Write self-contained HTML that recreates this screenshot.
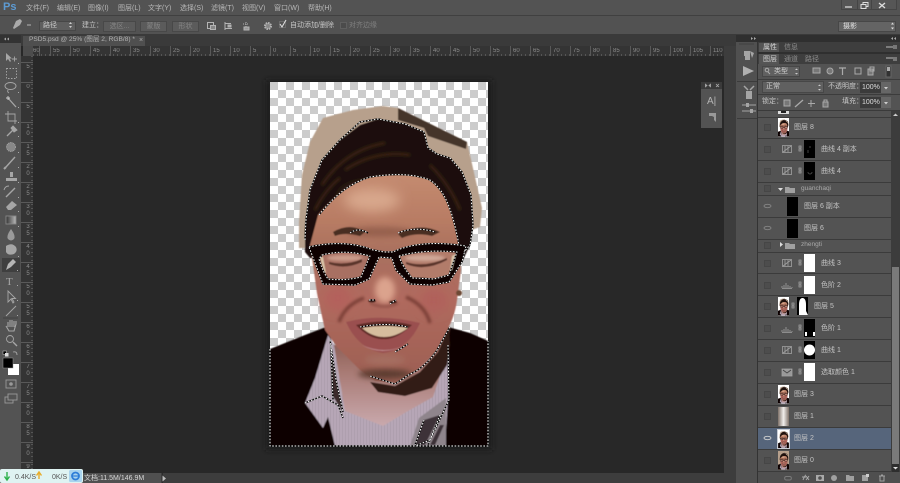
<!DOCTYPE html>
<html lang="zh"><head><meta charset="utf-8"><title>PS</title>
<style>
html,body{margin:0;padding:0;background:#282828}
#a{position:relative;width:900px;height:483px;overflow:hidden;background:#282828;font-family:"Liberation Sans","Noto Sans CJK SC",sans-serif;color:#c8c8c8}
.b{position:absolute}
.t{position:absolute;white-space:nowrap;line-height:1;font-size:7px;filter:blur(.3px)}
.m{top:5px;color:#b8b8b8;font-size:7px}
.btn{position:absolute;top:21px;height:9px;background:#5b5b5b;border:1px solid #484848;color:#858585;font-size:7px;line-height:9px;text-align:center}
.h{top:48px;font-size:6px;color:#8c8c8c}
.v{position:absolute;left:25px;width:6px;font-size:6px;line-height:7px;color:#8c8c8c;word-break:break-all;text-align:center;filter:blur(.3px)}
.r{position:absolute;left:758px;width:133px;background:#535353;border-bottom:1px solid #3b3b3b;box-sizing:border-box}
.lt{font-size:7px;color:#c4c4c4}
.mk{position:absolute;width:11px;height:18px}
</style></head><body><div id="a">
<!-- top bars -->
<div class="b" style="left:0;top:0;width:900px;height:15px;background:#535353"></div>
<div class="b" style="left:0;top:15px;width:900px;height:1px;background:#404040"></div>
<div class="b" style="left:0;top:16px;width:900px;height:19px;background:#525252"></div>
<div class="b" style="left:0;top:34px;width:900px;height:1px;background:#3a3a3a"></div>
<div class="b" style="left:0;top:35px;width:900px;height:11px;background:#3a3a3a"></div>
<div class="t" style="left:3px;top:2px;font-size:11px;font-weight:bold;color:#5d9bd3">Ps</div>
<div class="t m" style="left:26px">文件(F)</div><div class="t m" style="left:57px">编辑(E)</div><div class="t m" style="left:88px">图像(I)</div><div class="t m" style="left:118px">图层(L)</div><div class="t m" style="left:148px">文字(Y)</div><div class="t m" style="left:180px">选择(S)</div><div class="t m" style="left:211px">滤镜(T)</div><div class="t m" style="left:242px">视图(V)</div><div class="t m" style="left:274px">窗口(W)</div><div class="t m" style="left:308px">帮助(H)</div>
<!-- window buttons -->
<div class="b" style="left:841px;top:0;width:56px;height:10px;background:#565656;border:1px solid #454545;border-top:0;box-sizing:border-box"></div>
<div class="b" style="left:857px;top:0;width:1px;height:10px;background:#454545"></div><div class="b" style="left:871px;top:0;width:1px;height:10px;background:#454545"></div>
<!-- options -->
<div class="b" style="left:39px;top:21px;width:37px;height:10px;background:#5f5f5f;border:1px solid #474747;box-sizing:border-box"></div>
<div class="t" style="left:43px;top:22px;color:#ccc">路径</div>
<div class="t" style="left:82px;top:22px;color:#c4c4c4">建立：</div>
<div class="btn" style="left:103px;width:31px">选区...</div><div class="btn" style="left:140px;width:25px">蒙版</div><div class="btn" style="left:172px;width:25px">形状</div>
<div class="t" style="left:290px;top:22px;color:#c8c8c8">自动添加/删除</div>
<div class="t" style="left:349px;top:22px;color:#808080">对齐边缘</div>
<div class="b" style="left:838px;top:21px;width:58px;height:11px;background:#646464;border:1px solid #474747;box-sizing:border-box"></div>
<div class="t" style="left:843px;top:23px;color:#e0e0e0">摄影</div>
<!-- document tab -->
<div class="b" style="left:23px;top:36px;width:122px;height:10px;background:#4f4f4f"></div>
<div class="t" style="left:29px;top:37px;color:#b4b4b4;font-size:6.6px">PSD5.psd @ 25% (图层 2, RGB/8) *</div>
<div class="t" style="left:139px;top:37px;color:#aaa">×</div>
<!-- left toolbar -->
<div class="b" style="left:0;top:43px;width:21px;height:440px;background:#535353"></div>
<div class="b" style="left:0;top:35px;width:21px;height:8px;background:#333"></div>
<div class="b" style="left:2px;top:258px;width:18px;height:14px;background:#3f3f3f"></div>
<!-- rulers -->
<div class="b" style="left:23px;top:46px;width:10px;height:10px;background:#4c4c4c"></div>
<div class="b" style="left:33px;top:46px;width:691px;height:10px;background:repeating-linear-gradient(90deg,#595959 0 1px,transparent 1px 20px) 17px 0,#343434"></div>
<div class="b" style="left:33px;top:54px;width:691px;height:2px;background:repeating-linear-gradient(90deg,#555 0 1px,transparent 1px 4px)"></div>
<div class="b" style="left:21px;top:56px;width:12px;height:417px;background:#343434"></div>
<div class="b" style="left:31px;top:56px;width:2px;height:417px;background:repeating-linear-gradient(180deg,#555 0 1px,transparent 1px 4px)"></div>
<div class="b" style="left:21px;top:62px;width:12px;height:411px;background:repeating-linear-gradient(180deg,#595959 0 1px,transparent 1px 20px)"></div>
<div class="t h" style="left:33px">60</div><div class="t h" style="left:53px">55</div><div class="t h" style="left:73px">50</div><div class="t h" style="left:93px">45</div><div class="t h" style="left:113px">40</div><div class="t h" style="left:133px">35</div><div class="t h" style="left:153px">30</div><div class="t h" style="left:173px">25</div><div class="t h" style="left:193px">20</div><div class="t h" style="left:213px">15</div><div class="t h" style="left:233px">10</div><div class="t h" style="left:253px">5</div><div class="t h" style="left:273px">0</div><div class="t h" style="left:293px">5</div><div class="t h" style="left:313px">10</div><div class="t h" style="left:333px">15</div><div class="t h" style="left:353px">20</div><div class="t h" style="left:373px">25</div><div class="t h" style="left:393px">30</div><div class="t h" style="left:413px">35</div><div class="t h" style="left:433px">40</div><div class="t h" style="left:453px">45</div><div class="t h" style="left:473px">50</div><div class="t h" style="left:493px">55</div><div class="t h" style="left:513px">60</div><div class="t h" style="left:533px">65</div><div class="t h" style="left:553px">70</div><div class="t h" style="left:573px">75</div><div class="t h" style="left:593px">80</div><div class="t h" style="left:613px">85</div><div class="t h" style="left:633px">90</div><div class="t h" style="left:653px">95</div><div class="t h" style="left:673px">100</div><div class="t h" style="left:693px">105</div><div class="t h" style="left:713px">110</div>
<div class="v" style="top:64px">5</div><div class="v" style="top:84px">0</div><div class="v" style="top:104px">5</div><div class="v" style="top:124px">10</div><div class="v" style="top:144px">15</div><div class="v" style="top:164px">20</div><div class="v" style="top:184px">25</div><div class="v" style="top:204px">30</div><div class="v" style="top:224px">35</div><div class="v" style="top:244px">40</div><div class="v" style="top:264px">45</div><div class="v" style="top:284px">50</div><div class="v" style="top:304px">55</div><div class="v" style="top:324px">60</div><div class="v" style="top:344px">65</div><div class="v" style="top:364px">70</div><div class="v" style="top:384px">75</div><div class="v" style="top:404px">80</div><div class="v" style="top:424px">85</div><div class="v" style="top:444px">90</div><div class="v" style="top:464px">95</div>
<!-- right strip and status -->
<div class="b" style="left:724px;top:46px;width:12px;height:437px;background:#3d3d3d"></div>
<div class="b" style="left:21px;top:473px;width:715px;height:10px;background:#3d3d3d"></div>
<div class="b" style="left:83px;top:473px;width:78px;height:10px;background:#505050"></div>
<div class="t" style="left:84px;top:475px;color:#d8d8d8">文档:11.5M/146.9M</div>
<div class="b" style="left:162px;top:473px;width:1px;height:10px;background:#2c2c2c"></div>
<!-- dock -->
<div class="b" style="left:736px;top:35px;width:164px;height:8px;background:#2f2f2f"></div>
<div class="b" style="left:736px;top:42px;width:22px;height:441px;background:#505050;border-right:1px solid #333;box-sizing:border-box"></div>
<div class="b" style="left:758px;top:42px;width:142px;height:441px;background:#535353"></div>
<div class="b" style="left:758px;top:42px;width:142px;height:10px;background:#3e3e3e"></div>
<div class="b" style="left:759px;top:43px;width:20px;height:9px;background:#555"></div>
<div class="b" style="left:758px;top:52px;width:142px;height:2px;background:#2f2f2f"></div>
<div class="b" style="left:758px;top:54px;width:142px;height:10px;background:#3e3e3e"></div>
<div class="b" style="left:759px;top:54px;width:20px;height:10px;background:#555"></div>
<div class="t" style="left:763px;top:44px;color:#d4d4d4">属性</div><div class="t" style="left:784px;top:44px;color:#8e8e8e">信息</div>
<div class="t" style="left:763px;top:56px;color:#d4d4d4">图层</div><div class="t" style="left:784px;top:56px;color:#8e8e8e">通道</div><div class="t" style="left:805px;top:56px;color:#8e8e8e">路径</div>
<!-- layer controls -->
<div class="b" style="left:762px;top:66px;width:38px;height:11px;background:#606060;border:1px solid #474747;box-sizing:border-box"></div>
<div class="t" style="left:774px;top:68px;color:#d0d0d0">类型</div>
<div class="b" style="left:758px;top:79px;width:142px;height:1px;background:#3c3c3c"></div>
<div class="b" style="left:762px;top:81px;width:62px;height:12px;background:#606060;border:1px solid #474747;box-sizing:border-box"></div>
<div class="t" style="left:766px;top:83px;color:#d0d0d0">正常</div>
<div class="t" style="left:828px;top:83px;color:#c8c8c8">不透明度：</div>
<div class="b" style="left:860px;top:82px;width:31px;height:11px;background:#3b3b3b"></div>
<div class="b" style="left:881px;top:82px;width:10px;height:11px;background:#666"></div>
<div class="t" style="left:862px;top:84px;color:#ddd">100%</div>
<div class="b" style="left:758px;top:94px;width:142px;height:1px;background:#3c3c3c"></div>
<div class="t" style="left:762px;top:98px;color:#c8c8c8">锁定：</div>
<div class="t" style="left:842px;top:98px;color:#c8c8c8">填充：</div>
<div class="b" style="left:860px;top:97px;width:31px;height:11px;background:#3b3b3b"></div>
<div class="b" style="left:881px;top:97px;width:10px;height:11px;background:#666"></div>
<div class="t" style="left:862px;top:99px;color:#ddd">100%</div>
<div class="b" style="left:758px;top:110px;width:142px;height:1px;background:#3a3a3a"></div>
<!-- layer rows -->
<div class="r" style="top:111px;height:7px"></div>
<div class="r" style="top:118px;height:21px"></div>
<div class="r" style="top:139px;height:22px"></div>
<div class="r" style="top:161px;height:22px"></div>
<div class="r" style="top:183px;height:13px"></div>
<div class="r" style="top:196px;height:22px"></div>
<div class="r" style="top:218px;height:22px"></div>
<div class="r" style="top:240px;height:13px"></div>
<div class="r" style="top:253px;height:21px"></div>
<div class="r" style="top:274px;height:22px"></div>
<div class="r" style="top:296px;height:22px"></div>
<div class="r" style="top:318px;height:22px"></div>
<div class="r" style="top:340px;height:22px"></div>
<div class="r" style="top:362px;height:22px"></div>
<div class="r" style="top:384px;height:22px"></div>
<div class="r" style="top:406px;height:22px"></div>
<div class="r" style="top:428px;height:22px;background:#56657b"></div>
<div class="r" style="top:450px;height:22px"></div>
<div class="b" style="left:758px;top:472px;width:142px;height:11px;background:#4f4f4f"></div>
<!-- scrollbar -->
<div class="b" style="left:891px;top:111px;width:9px;height:361px;background:#3c3c3c"></div>
<div class="b" style="left:892px;top:267px;width:7px;height:197px;background:#7a7a7a"></div>
<div class="b" style="left:892px;top:464px;width:7px;height:8px;background:#2e2e2e"></div>
<!-- floating panel -->
<div class="b" style="left:701px;top:82px;width:21px;height:46px;background:#535353"></div>
<div class="b" style="left:701px;top:82px;width:21px;height:7px;background:#3a3a3a"></div>
<div class="t" style="left:707px;top:97px;font-size:10px;color:#b5b5b5">A|</div>
<!-- layer labels -->
<div class="t lt" style="left:794px;top:124px">图层 8</div>
<div class="t lt" style="left:821px;top:146px">曲线 4 副本</div>
<div class="t lt" style="left:821px;top:168px">曲线 4</div>
<div class="t lt" style="left:801px;top:186px;color:#aaa;font-size:6.5px">guanchaqi</div>
<div class="t lt" style="left:804px;top:203px">图层 6 副本</div>
<div class="t lt" style="left:804px;top:225px">图层 6</div>
<div class="t lt" style="left:801px;top:242px;color:#aaa;font-size:6.5px">zhengti</div>
<div class="t lt" style="left:821px;top:260px">曲线 3</div>
<div class="t lt" style="left:821px;top:282px">色阶 2</div>
<div class="t lt" style="left:814px;top:303px">图层 5</div>
<div class="t lt" style="left:821px;top:325px">色阶 1</div>
<div class="t lt" style="left:821px;top:347px">曲线 1</div>
<div class="t lt" style="left:821px;top:369px">选取颜色 1</div>
<div class="t lt" style="left:794px;top:391px">图层 3</div>
<div class="t lt" style="left:794px;top:413px">图层 1</div>
<div class="t lt" style="left:794px;top:435px">图层 2</div>
<div class="t lt" style="left:794px;top:457px">图层 0</div>
<!-- masks -->
<div class="mk" style="left:804px;top:140px;background:#000"></div>
<div class="mk" style="left:804px;top:162px;background:#000"></div>
<div class="mk" style="left:787px;top:197px;width:11px;height:19px;background:#000"></div>
<div class="mk" style="left:787px;top:219px;width:11px;height:19px;background:#000"></div>
<div class="mk" style="left:804px;top:254px;background:#fff"></div>
<div class="mk" style="left:804px;top:276px;background:#fff"></div>
<div class="mk" style="left:804px;top:319px;background:#000"></div>
<div class="mk" style="left:804px;top:341px;background:#000"></div>
<div class="mk" style="left:804px;top:363px;background:#fff"></div>
<!-- main svg -->
<svg class="b" style="left:0;top:0" width="900" height="483" viewBox="0 0 900 483" xmlns="http://www.w3.org/2000/svg">
<defs>
<pattern id="ck" width="16" height="16" patternUnits="userSpaceOnUse" x="270" y="82"><rect width="16" height="16" fill="#fff"/><rect width="8" height="8" fill="#ccc"/><rect x="8" y="8" width="8" height="8" fill="#ccc"/></pattern>
<pattern id="st" width="3" height="3" patternUnits="userSpaceOnUse"><rect width="3" height="3" fill="#b9aab9"/><rect width="1" height="3" fill="#a596a6"/></pattern>
<filter id="bl" x="-10%" y="-10%" width="120%" height="120%"><feGaussianBlur stdDeviation=".5"/></filter>
<filter id="b6" x="-60%" y="-60%" width="220%" height="220%"><feGaussianBlur stdDeviation="6"/></filter>
<filter id="b3" x="-60%" y="-60%" width="220%" height="220%"><feGaussianBlur stdDeviation="3"/></filter>
<filter id="b1" x="-60%" y="-60%" width="220%" height="220%"><feGaussianBlur stdDeviation="1.200"/></filter>
<filter id="ui" x="-5%" y="-5%" width="110%" height="110%"><feGaussianBlur stdDeviation=".35"/></filter>
<linearGradient id="sk" x1="0" y1="0" x2="0" y2="1"><stop offset="0" stop-color="#c48b70"/><stop offset=".22" stop-color="#b87c64"/><stop offset=".38" stop-color="#a9705e"/><stop offset=".6" stop-color="#b06a5e"/><stop offset="1" stop-color="#9c5f53"/></linearGradient>
<linearGradient id="nk" x1="0" y1="0" x2="0" y2="1"><stop offset="0" stop-color="#7c5046"/><stop offset=".45" stop-color="#a87a74"/><stop offset="1" stop-color="#c9a9ad"/></linearGradient>
<linearGradient id="gr" x1="0" y1="0" x2="1" y2="0"><stop offset="0" stop-color="#7d7068"/><stop offset=".5" stop-color="#f2efec"/><stop offset="1" stop-color="#7d7068"/></linearGradient>
<linearGradient id="tg" x1="0" y1="0" x2="1" y2="0"><stop offset="0" stop-color="#333"/><stop offset="1" stop-color="#bbb"/></linearGradient>
<symbol id="p" viewBox="270 82 218 364">
<g filter="url(#bl)">
<path d="M299,248 L299,222 L302,175 L310,142 L323,118 L353,110 L383,106 L398,108 L467,142 L470,155 L482,208 L480,227 L466,232 L466,245 L305,248Z" fill="#b7a08c"/>
<path d="M398,108 L467,142 L466,149 L428,136 L424,128 L398,120Z" fill="#45362a"/>
<path d="M305,252 L305,225 L310,190 L322,160 L340,140 L360,125 L378,119 L405,124 L424,132 L428,148 L437,154 L450,158 L462,172 L471,195 L473,225 L470,245 L462,262 L310,258Z" fill="#1b0e0a"/>
<path d="M322,185 Q345,150 385,143 M345,170 Q375,150 410,155 M430,165 Q450,185 460,210 M315,210 Q325,190 340,178" stroke="#3a2218" stroke-width="3" fill="none" filter="url(#b1)"/>
<path d="M270,349 L305,335 L326,327 L340,360 L448,327 L470,333 L488,341 L488,446 L270,446Z" fill="#0d0606"/>
<path d="M328,335 L315,378 L305,403 L323,428 L328,417 L335,446 L445,446 L448,400 L449,335 L435,345 L370,400Z" fill="url(#st)"/>
<path d="M334,345 L345,411 L383,426 L408,411 L433,397 L447,355 L450,327 L380,350Z" fill="url(#nk)"/>
<path d="M449,328 L438,352 L420,372 L395,386 L370,382 L378,392 L405,396 L432,388 L447,365 L450,345Z" fill="#321c14"/>
<path d="M419,418 L446,398 L446,446 L410,446 Z" fill="#8f858c"/>
<path d="M424,420 L440,415 L425,445 L415,445Z M440,425 L444,425 L435,445 L430,445Z" fill="#3d3338"/>
<path d="M330,345 L336,380 L343,412 L332,395Z" fill="#3a2a2a"/>
<path d="M318,215 C335,195 350,183 370,177 C395,173 415,174 430,180 C445,190 452,210 458,240 L461,270 L457,300 C455,315 450,325 448,328 L437,350 L417,370 L397,383 L375,381 L360,370 L337,347 L325,330 L317,293 L313,265 L310,245Z" fill="url(#sk)"/>
<ellipse cx="372" cy="200" rx="28" ry="12" fill="#d8a78c" filter="url(#b6)"/>
<ellipse cx="380" cy="232" rx="34" ry="5" fill="#96604e" filter="url(#b3)"/>
<ellipse cx="338" cy="298" rx="14" ry="12" fill="#b4605c" filter="url(#b6)"/>
<ellipse cx="434" cy="300" rx="14" ry="12" fill="#b0605a" filter="url(#b6)"/>
<ellipse cx="385" cy="290" rx="10" ry="13" fill="#dba38d" filter="url(#b3)"/>
<path d="M364,298 Q345,305 339,322 M406,297 Q425,305 430,323" stroke="#7c4038" stroke-width="3.500" fill="none" filter="url(#b1)"/>
<path d="M370,303 Q385,310 398,303" stroke="#8a4c42" stroke-width="2" fill="none" filter="url(#b1)"/>
<ellipse cx="385" cy="374" rx="27" ry="5" fill="#5d3c30" filter="url(#b3)"/>
<ellipse cx="385" cy="360" rx="20" ry="5" fill="#a56e60" filter="url(#b3)"/>
<path d="M333,232 Q350,222 365,232 L360,236 Q345,232 335,236Z" fill="#4a2e24"/>
<path d="M398,234 Q420,222 440,232 L432,236 Q415,232 402,238Z" fill="#4a2e24"/>
<path d="M346,322 Q380,313 420,323 Q408,350 383,353 Q358,349 346,322Z" fill="#9a4f50"/>
<path d="M356,325 Q385,318 412,325 Q396,340 384,339 Q370,340 356,325Z" fill="#5e2925"/>
<path d="M362,328 Q385,324 408,328 Q396,337 384,337 Q372,337 362,328Z" fill="#d6bd9e"/>
<path d="M362,345 Q384,355 406,345 Q394,351 383,351 Q372,351 362,345Z" fill="#bc8688"/>
<circle cx="459" cy="293" r="3" fill="#6d4a36"/>
<path d="M309,247 Q345,239 373,250 L384,252 L393,252 Q420,239 466,246 L462,262 L449,282 L432,285 L410,284 L396,270 L392,258 L379,257 L369,279 L355,285 L323,284 Z" fill="#0c0606"/>
<path d="M322,255 Q345,249 370,256 L361,277 Q345,281 328,279 Q322,270 319,259Z" fill="#a86f62"/>
<path d="M399,256 Q425,249 457,252 L449,275 L434,279 L412,278 Q402,266 399,256Z" fill="#b27c6b"/>
<ellipse cx="345" cy="258" rx="18" ry="3" fill="#cc9d8c" filter="url(#b1)"/>
<ellipse cx="425" cy="258" rx="20" ry="3" fill="#d0a898" filter="url(#b1)"/>
<path d="M329,262 Q346,266 362,259 L362,262 Q345,270 329,264Z" fill="#5a342c"/>
<path d="M406,262 Q425,268 447,258 L447,260 Q425,272 406,264Z" fill="#5a342c"/>
<path d="M320,257 L323,257 L326,273 L324,272Z" fill="#d9c4a8"/>
<path d="M452,256 L456,254 L452,270 L450,270Z" fill="#d9c4a8"/>
<ellipse cx="372" cy="301" rx="4" ry="1.500" fill="#3a1f18"/><ellipse cx="393" cy="302" rx="4" ry="1.500" fill="#3a1f18"/>
</g>
</symbol>
</defs>
<rect x="266" y="80" width="226" height="370" fill="#1e1e1e" filter="url(#b3)"/>
<!-- photo -->
<rect x="270" y="82" width="218" height="364" fill="url(#ck)"/>
<use href="#p" x="270" y="82" width="218" height="364"/>
<!-- selection ants -->
<g fill="none" stroke-linejoin="round">
<g stroke="#000" stroke-width="1.400">
<path d="M305,240 L306,220 L310,190 L322,160 L340,140 L360,122 L378,119 L405,124 L424,132 L428,148 L437,154 L450,158 L462,172 L471,195 L473,225 L470,245 L464,252"/>
<path d="M319,215 C335,195 350,183 370,177 C395,173 415,174 430,180 C445,190 452,210 458,240 L459,245"/>
<path d="M309,247 Q345,239 373,250 L384,252 L393,252 Q420,239 466,246 L462,262 L449,282 L432,285 L410,284 L396,270 L392,258 L379,257 L369,279 L355,285 L323,284Z"/>
<path d="M322,255 Q345,249 370,256 L361,277 Q345,281 328,279 Q322,270 319,259Z M399,256 Q425,249 457,252 L449,275 L434,279 L412,278 Q402,266 399,256Z"/>
<path d="M350,233 Q358,227 368,233 M398,233 Q415,226 435,232"/>
<path d="M360,327 Q385,322 408,327 M395,352 L408,344"/>
<path d="M450,327 L437,350 Q425,368 410,374 L395,384 L370,376"/>
<path d="M330,340 L336,380 L343,412 M331,345 L333,400 M305,403 L322,396 L338,405 L343,418"/>
<path d="M448,345 L449,400 L430,440 L415,446 M424,420 L415,445 M440,415 L428,445"/>
<path d="M270,349 V446 H488 V341"/>
<path d="M369,300 H375 M390,304 L396,300"/>
</g>
<g stroke="#fff" stroke-width="1" stroke-dasharray="1.600 1.600">
<path d="M305,240 L306,220 L310,190 L322,160 L340,140 L360,122 L378,119 L405,124 L424,132 L428,148 L437,154 L450,158 L462,172 L471,195 L473,225 L470,245 L464,252"/>
<path d="M319,215 C335,195 350,183 370,177 C395,173 415,174 430,180 C445,190 452,210 458,240 L459,245"/>
<path d="M309,247 Q345,239 373,250 L384,252 L393,252 Q420,239 466,246 L462,262 L449,282 L432,285 L410,284 L396,270 L392,258 L379,257 L369,279 L355,285 L323,284Z"/>
<path d="M322,255 Q345,249 370,256 L361,277 Q345,281 328,279 Q322,270 319,259Z M399,256 Q425,249 457,252 L449,275 L434,279 L412,278 Q402,266 399,256Z"/>
<path d="M350,233 Q358,227 368,233 M398,233 Q415,226 435,232"/>
<path d="M360,327 Q385,322 408,327 M395,352 L408,344"/>
<path d="M450,327 L437,350 Q425,368 410,374 L395,384 L370,376"/>
<path d="M330,340 L336,380 L343,412 M331,345 L333,400 M305,403 L322,396 L338,405 L343,418"/>
<path d="M448,345 L449,400 L430,440 L415,446 M424,420 L415,445 M440,415 L428,445"/>
<path d="M270,349 V446 H488 V341"/>
<path d="M369,300 H375 M390,304 L396,300"/>
</g>
</g>
<g filter="url(#ui)">
<!-- window buttons -->
<path d="M845,7 H852 M879,3 L885,8 M885,3 L879,8" stroke="#ddd" stroke-width="1.300" fill="none"/>
<path d="M861,4.500 H866 V8.500 H861Z M863,4 V2.500 H868 V6.500 H866" stroke="#ddd" fill="none"/>
<!-- options icons -->
<g fill="none" stroke="#b4b4b4">
<path d="M13,28 L16,21 L20,19 L22,21 L20,25 L14,29Z" fill="#aaa" stroke="none"/><path d="M27,25 H31" stroke-width="1"/>
<path d="M69,24 l1.500,-2 1.500,2z M69,26 l1.500,2 1.500,-2z" fill="#ccc" stroke="none"/>
<rect x="207.500" y="22.500" width="6" height="6"/><rect x="210.500" y="25.500" width="5" height="4" fill="#888"/>
<path d="M225,22 V30 M225,23.500 H231 M225,28.500 H232"/><rect x="228" y="25" width="3" height="2" fill="#aaa"/>
<path d="M243,24 H249 M246,22 V29" stroke-dasharray="1 1"/><rect x="244" y="27" width="5" height="3" fill="#999"/>
<circle cx="268" cy="26" r="3" fill="#888" stroke-width="2" stroke-dasharray="1.500 .8"/>
<rect x="279.500" y="21.500" width="6" height="6" stroke="#6a6a6a"/><path d="M280,24 L282,27 L286,20" stroke="#ddd" stroke-width="1.100"/>
<rect x="340.500" y="22.500" width="6" height="6" stroke="#5f5f5f" fill="#4c4c4c"/>
<path d="M891,24.500 l1.500,-2 1.500,2z M891,27.500 l1.500,2 1.500,-2z" fill="#ddd" stroke="none"/>
</g>
<!-- dock arrows -->
<path d="M753,38.500 l-2,-1.500 v3z M756,38.500 l-2,-1.500 v3z M894,38.500 l2,-1.500 v3z M891,38.500 l2,-1.500 v3z M4,39 l2,-1.500 v3z M7,39 l2,-1.500 v3z" fill="#aaa"/>
<path d="M707,85.500 l-1.500,-1.300 v2.600z M709,85.500 l1.500,-1.300 v2.600z M716,84 l3,3 M719,84 l-3,3" stroke="#aaa" stroke-width=".8" fill="#aaa"/>
<path d="M886,47 H894 M886,58 H894" stroke="#bbb" stroke-width="1"/><rect x="893" y="45" width="4" height="4" fill="#777"/><rect x="893" y="57" width="4" height="4" fill="#777"/>
<!-- dock icons -->
<g fill="#a5a5a5">
<rect x="739" y="43.500" width="15" height="1" fill="#3f3f3f"/>
<rect x="744" y="51" width="6" height="5"/><rect x="745" y="56" width="5" height="4"/><path d="M750,51 L754,53 L752,58Z"/>
<path d="M743,66 L754,71 L743,76Z" fill="#b0b0b0"/>
<rect x="737" y="81" width="20" height="1" fill="#3b3b3b"/>
<rect x="746" y="91" width="6" height="8"/><path d="M744,86 L748,90 M754,86 L750,90" stroke="#a5a5a5" stroke-width="1.500"/>
<path d="M742,105 H756 M742,111 H756" stroke="#a5a5a5" stroke-width="1"/><rect x="746" y="103" width="3" height="4"/><rect x="750" y="109" width="3" height="4"/>
<rect x="737" y="118" width="20" height="1" fill="#3b3b3b"/>
<path d="M709,113 H716 V118 L712,116 H709Z M716,113 V122 L714,120 V113Z" fill="#999"/>
</g>
<!-- left tools -->
<g fill="none" stroke="#a6a6a6" stroke-width=".9">
<path d="M6,53 V61 L8,59 L10,62 L11,61 L9.500,58.500 L12,58.500Z" fill="#a6a6a6" stroke="none"/><path d="M12,59 H17 M14.500,56.500 V61.500"/>
<rect x="6.500" y="68.500" width="10" height="10" stroke-dasharray="1.500 1.500"/>
<ellipse cx="10.500" cy="86" rx="5.500" ry="3.500"/><path d="M8,90 Q7,92 9,93"/>
<path d="M8,98 L16,107" stroke-width="1.300"/><path d="M6,98 H10 M8,96 V100" stroke="#ccc"/>
<path d="M8,111 V121 H17 M5,114 H15 V124"/>
<path d="M7,136 L14,129" stroke-width="1.300"/><path d="M13,126 L17,130 L14,132 L11,128Z" fill="#a6a6a6"/>
<circle cx="11" cy="147" r="4.500" fill="#888" stroke-dasharray="1 .8"/>
<path d="M6,167 L15,157" stroke-width="1.400"/><path d="M6,167 L4,169" stroke-width="2"/>
<path d="M10,172 H13 V177 H10Z M6,178 H17 V181 H6Z" fill="#a6a6a6" stroke="none"/>
<path d="M6,197 L15,188" stroke-width="1.400"/><path d="M4,190 Q5,186 9,186"/>
<path d="M6,207 L12,201 L17,205 L11,210 H8Z" fill="#a6a6a6" stroke="none"/>
<rect x="6" y="216" width="10" height="8" fill="url(#tg)" stroke="#888"/>
<path d="M11,229 Q6,236 8,239 Q11,242 14,239 Q16,236 11,229Z" fill="#9a9a9a" stroke="none"/>
<path d="M6,246 Q12,242 16,247 Q18,251 14,254 Q8,256 6,252Z" fill="#a6a6a6" stroke="none"/>
<path d="M6,270 L8,264 L13,259 L16,262 L11,267 Z" fill="#b5b5b5" stroke="none"/>
<path d="M8,291 V302 L11,299 L13,303 L14,302 L12,298.500 L15.500,298.500Z"/>
<path d="M6,316 L16,306"/>
<path d="M6,326 L9,331 H14 L16,324 V321 M8,322 V327 M10,320 V327 M12,320 V327 M14,321 V327" stroke-width="1.100"/>
<circle cx="10" cy="339" r="3.500"/><path d="M13,342 L17,346" stroke-width="1.400"/>
<rect x="3" y="351" width="3.500" height="3.500" fill="#000" stroke="#ccc" stroke-width=".5"/><rect x="5" y="353" width="3.500" height="3.500" fill="#ddd" stroke="none"/>
<path d="M13,352 Q17,351 17,355"/>
<rect x="6" y="380" width="10" height="8" stroke="#999"/><circle cx="11" cy="384" r="1.800" fill="#999" stroke="none"/>
<rect x="5" y="397" width="8" height="6" stroke="#999"/><rect x="8" y="394" width="9" height="6" fill="#535353" stroke="#999"/>
</g>
<text x="6" y="285" font-family="Liberation Serif,serif" font-size="11" fill="#a6a6a6">T</text>
<path d="M18,63 h1 v1 h-1z M18,92 h1 v1 h-1z M18,107 h1 v1 h-1z M18,122 h1 v1 h-1z M18,136 h1 v1 h-1z M18,152 h1 v1 h-1z M18,167 h1 v1 h-1z M18,182 h1 v1 h-1z M18,197 h1 v1 h-1z M18,211 h1 v1 h-1z M18,226 h1 v1 h-1z M18,256 h1 v1 h-1z M17,270 h1 v1 h-1z M17,285 h1 v1 h-1z M17,300 h1 v1 h-1z M17,315 h1 v1 h-1z" fill="#aaa"/>
<path d="M3,318 H18" stroke="#404040"/>
<!-- panel controls icons -->
<g fill="none" stroke="#aaa">
<circle cx="767" cy="70" r="1.800"/><path d="M768,72 L770,74"/>
<path d="M795,70 l1.500,-1.500 1.500,1.500z M795,73 l1.500,1.500 1.500,-1.500z" fill="#ccc" stroke="none"/>
<rect x="813" y="68" width="7" height="5" fill="#777"/>
<circle cx="830" cy="71" r="3" fill="#777"/>
<path d="M839,68 H846 M842.500,68 V75" stroke-width="1.200"/>
<rect x="855" y="68" width="6" height="6"/>
<rect x="868" y="69" width="5" height="6" fill="#777"/><rect x="870" y="67" width="4" height="4"/>
<rect x="886" y="66" width="5" height="11" fill="#333" stroke="#666"/><rect x="887" y="67" width="3" height="4" fill="#aaa" stroke="none"/>
<path d="M818,86 l1.500,-1.500 1.500,1.500z M818,89 l1.500,1.500 1.500,-1.500z" fill="#ccc" stroke="none"/>
<path d="M884,87 h4 l-2,2.500z M884,102 h4 l-2,2.500z" fill="#ccc" stroke="none"/>
<rect x="784" y="100" width="6" height="6" fill="#777"/>
<path d="M795,107 L803,100" stroke-width="1.300"/>
<path d="M811,100 V107 M808,103.500 H815"/>
<rect x="823" y="102" width="5" height="5" fill="#777"/><path d="M824,102 V100 H827 V102"/>
</g>
</g>
<rect x="8" y="364" width="11" height="11" fill="#fff"/>
<rect x="3" y="358" width="10" height="10" fill="#000" stroke="#999" stroke-width=".5"/>
<!-- thumbnail above -->
<rect x="778" y="111" width="11" height="3" fill="#ddd"/><rect x="781" y="111" width="5" height="2" fill="#222"/>
<!-- thumbs -->
<rect x="778" y="118" width="11" height="19" fill="#fff"/><use href="#p" x="778" y="118" width="11" height="19"/>
<rect x="778" y="297" width="11" height="19" fill="#fff"/><use href="#p" x="778" y="297" width="11" height="19"/>
<rect x="778" y="385" width="11" height="19" fill="#fff"/><use href="#p" x="778" y="385" width="11" height="19"/>
<rect x="778" y="407" width="11" height="19" fill="url(#gr)"/>
<rect x="777.500" y="429.500" width="12" height="19" fill="#fff" stroke="#c8ccd4"/><use href="#p" x="778" y="430" width="11" height="18"/>
<rect x="778" y="451" width="11" height="19" fill="#b7a08c"/><use href="#p" x="778" y="451" width="11" height="19"/>
<!-- 图层5 mask -->
<rect x="797" y="297" width="11" height="18" fill="#000"/><path d="M799,315 V305 Q799,298 802.500,298 Q806,298 806,305 V311 L808,315Z" fill="#fff"/>
<path d="M805,336 V332 H807 V336Z M813,336 V332 H815 V336Z" fill="#fff"/>
<circle cx="809.500" cy="350" r="5.500" fill="#fff"/>
<path d="M808,150 v3 M810,146 v2 M808,172 a2,2 0 1,0 4,0" stroke="#444" fill="none"/>
<!-- adj icons -->
<g fill="none" stroke="#a0a0a0" stroke-width=".8" filter="url(#ui)">
<rect x="782.500" y="145.500" width="9" height="7"/><path d="M783,152 L791,146 M785,146 V152 M788,146 V152"/>
<rect x="782.500" y="167.500" width="9" height="7"/><path d="M783,174 L791,168 M785,168 V174 M788,168 V174"/>
<rect x="782.500" y="259.500" width="9" height="7"/><path d="M783,266 L791,260 M785,260 V266 M788,260 V266"/>
<rect x="782.500" y="346.500" width="9" height="7"/><path d="M783,353 L791,347 M785,347 V353 M788,347 V353"/>
<path d="M782,288 v-2 m2,2 v-3 m2,3 v-5 m2,5 v-3 m2,3 v-2 m2,2 v-1 M782,288.500 H792"/>
<path d="M782,332 v-2 m2,2 v-3 m2,3 v-5 m2,5 v-3 m2,3 v-2 m2,2 v-1 M782,332.500 H792"/>
<rect x="782" y="369" width="10" height="7" fill="#999"/><path d="M783,370 L787,373 L791,370" stroke="#444"/>
<path d="M799,146 h2 v2 h-2z M799,149 h2 v2 h-2z M799,168 h2 v2 h-2z M799,171 h2 v2 h-2z M799,260 h2 v2 h-2z M799,263 h2 v2 h-2z M799,282 h2 v2 h-2z M799,285 h2 v2 h-2z M799,325 h2 v2 h-2z M799,328 h2 v2 h-2z M799,347 h2 v2 h-2z M799,350 h2 v2 h-2z M799,369 h2 v2 h-2z M799,372 h2 v2 h-2z M792,303 h2 v2 h-2z M792,306 h2 v2 h-2z"/>
</g>
<!-- checkboxes -->
<g fill="#4d4d4d" stroke="#464646">
<rect x="764.500" y="124.500" width="6" height="6"/><rect x="764.500" y="146.500" width="6" height="6"/><rect x="764.500" y="168.500" width="6" height="6"/><rect x="764.500" y="185.500" width="6" height="6"/><rect x="764.500" y="242.500" width="6" height="6"/><rect x="764.500" y="260.500" width="6" height="6"/><rect x="764.500" y="282.500" width="6" height="6"/><rect x="764.500" y="303.500" width="6" height="6"/><rect x="764.500" y="325.500" width="6" height="6"/><rect x="764.500" y="347.500" width="6" height="6"/><rect x="764.500" y="369.500" width="6" height="6"/><rect x="764.500" y="391.500" width="6" height="6"/><rect x="764.500" y="413.500" width="6" height="6"/><rect x="764.500" y="457.500" width="6" height="6"/>
</g>
<!-- eyes -->
<g fill="none" stroke="#858585" stroke-width=".9">
<ellipse cx="767.500" cy="206" rx="3.500" ry="1.700"/><ellipse cx="767.500" cy="228" rx="3.500" ry="1.700"/>
<ellipse cx="767.500" cy="438" rx="3.500" ry="1.700" stroke="#d0d0d0"/>
</g>
<!-- groups -->
<path d="M778,188 h5 l-2.500,3z M780,242 v5 l3,-2.500z" fill="#ddd"/>
<path d="M785,187 h4 l1,1 h5 v5 h-10z M785,243 h4 l1,1 h5 v5 h-10z" fill="#a0a0a0"/>
<!-- panel bottom -->
<g fill="none" stroke="#9a9a9a">
<path d="M786,476.500 h4 M790,476.500 a1.800,1.800 0 0 1 0,3.500 h-4 a1.800,1.800 0 0 1 0,-3.500" stroke="#7a7a7a"/>
<path d="M803,480 q2,-5 3,-5 M802,477 h4 M806,476 l3,4 M809,476 l-3,4" stroke="#aaa"/>
<rect x="816" y="475" width="8" height="6" fill="#aaa" stroke="none"/><circle cx="820" cy="478" r="1.800" fill="#4f4f4f" stroke="none"/>
<circle cx="834" cy="478" r="3" fill="#a0a0a0" stroke="none"/>
<path d="M846,475 h3 l1,1 h4 v5 h-8z" fill="#a0a0a0" stroke="none"/>
<rect x="862" y="475" width="6" height="6" fill="#a0a0a0" stroke="none"/><rect x="866" y="474" width="3" height="3" fill="#ccc" stroke="none"/>
<path d="M879,476 h6 M880,476 v5 h4 v-5 M881,475 h2" stroke="#a0a0a0"/>
</g>
<path d="M893,467 h5 l-2.500,2.500z" fill="#ddd"/>
<path d="M893,116 l2.500,-2.500 2.500,2.500z" fill="#ccc"/>
<path d="M162.500,475.500 v6 l3.500,-3z" fill="#bbb"/>
<!-- net widget -->
<rect x="0" y="469" width="83" height="14" rx="2" fill="#dff3f2"/>
<rect x="69" y="470" width="13" height="12" rx="1.500" fill="#a9d4ee"/>
<path d="M7,472 V479 M4.500,476.500 L7,480 L9.500,476.500" stroke="#2cb14a" stroke-width="1.400" fill="none"/>
<path d="M39,479 V473 M36.500,475.500 L39,472 L41.500,475.500" stroke="#e8ac2a" stroke-width="1.400" fill="none"/>
<text x="15" y="479" font-family="Liberation Sans" font-size="7" fill="#555">0.4K/S</text>
<text x="52" y="479" font-family="Liberation Sans" font-size="7" fill="#555">0K/S</text>
<circle cx="75.500" cy="476" r="3.500" fill="none" stroke="#2f7ed8" stroke-width="1.800"/>
<path d="M72,476 H79" stroke="#2f7ed8" stroke-width="1.200"/>
</svg>
</div></body></html>
